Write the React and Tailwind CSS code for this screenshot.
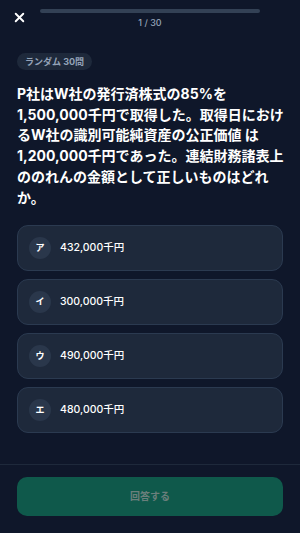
import React, { useState } from 'react';

const options = [
  { key: 'ア', label: '432,000千円' },
  { key: 'イ', label: '300,000千円' },
  { key: 'ウ', label: '490,000千円' },
  { key: 'エ', label: '480,000千円' },
];

export default function App() {
  const [selected, setSelected] = useState(null);

  return (
    <div
      className="w-[300px] h-[533px] bg-[#0f172a] flex flex-col overflow-hidden"
      style={{ fontFamily: 'Inter, "Noto Sans CJK JP", "Noto Sans", sans-serif' }}
    >
      {/* Header */}
      <div className="flex items-start px-[13px] pt-[9px] h-[40px]">
        <button className="w-[13px] h-[13px] mt-[2px] text-white shrink-0">
          <svg viewBox="0 0 24 24" className="w-[13px] h-[13px]" fill="none" stroke="currentColor" strokeWidth="3.5" strokeLinecap="round">
            <path d="M5 5l14 14M19 5L5 19" />
          </svg>
        </button>
        <div className="ml-[14px] w-[220px] flex flex-col items-center">
          <div className="w-full h-[4px] rounded-full bg-[#334155]" />
          <div className="mt-[4px] text-[9px] leading-[11px] font-medium text-[#94a3b8]">1 / 30</div>
        </div>
      </div>

      {/* Content */}
      <div className="flex-1 px-[17px] pt-[13px]">
        <div className="flex">
          <span className="flex items-center h-[17px] px-[8px] rounded-full bg-[#1e293b] text-[9px] leading-none font-bold text-[#94a3b8]">
            ランダム 30問
          </span>
        </div>

        <p className="mt-[14px] text-[14px] leading-[20.7px] font-bold text-white w-[270px]">
          P社はW社の発行済株式の85%を1,500,000千円で取得した。取得日におけるW社の識別可能純資産の公正価値 は1,200,000千円であった。連結財務諸表上ののれんの金額として正しいものはどれか。
        </p>

        <div className="mt-[17px] flex flex-col gap-[8px]">
          {options.map((o) => (
            <button
              key={o.key}
              onClick={() => setSelected(o.key)}
              className={`flex items-center gap-[9px] h-[46px] px-[11px] rounded-[11px] border text-left ${
                selected === o.key ? 'border-[#10b981] bg-[#1e293b]' : 'border-[#2b3a50] bg-[#1e293b]'
              }`}
            >
              <span className="w-[22px] h-[22px] rounded-full bg-[#2a374b] flex items-center justify-center text-[9px] font-bold text-white">
                {o.key}
              </span>
              <span className="text-[10.5px] font-medium text-white">{o.label}</span>
            </button>
          ))}
        </div>
      </div>

      {/* Footer */}
      <div className="border-t border-[#1e293b] px-[17px] pt-[12px] pb-[17px]">
        <button className="w-full h-[39px] rounded-[10px] bg-[#0f594b] text-[10px] font-bold text-[#6b7f7c]">
          回答する
        </button>
      </div>
    </div>
  );
}
